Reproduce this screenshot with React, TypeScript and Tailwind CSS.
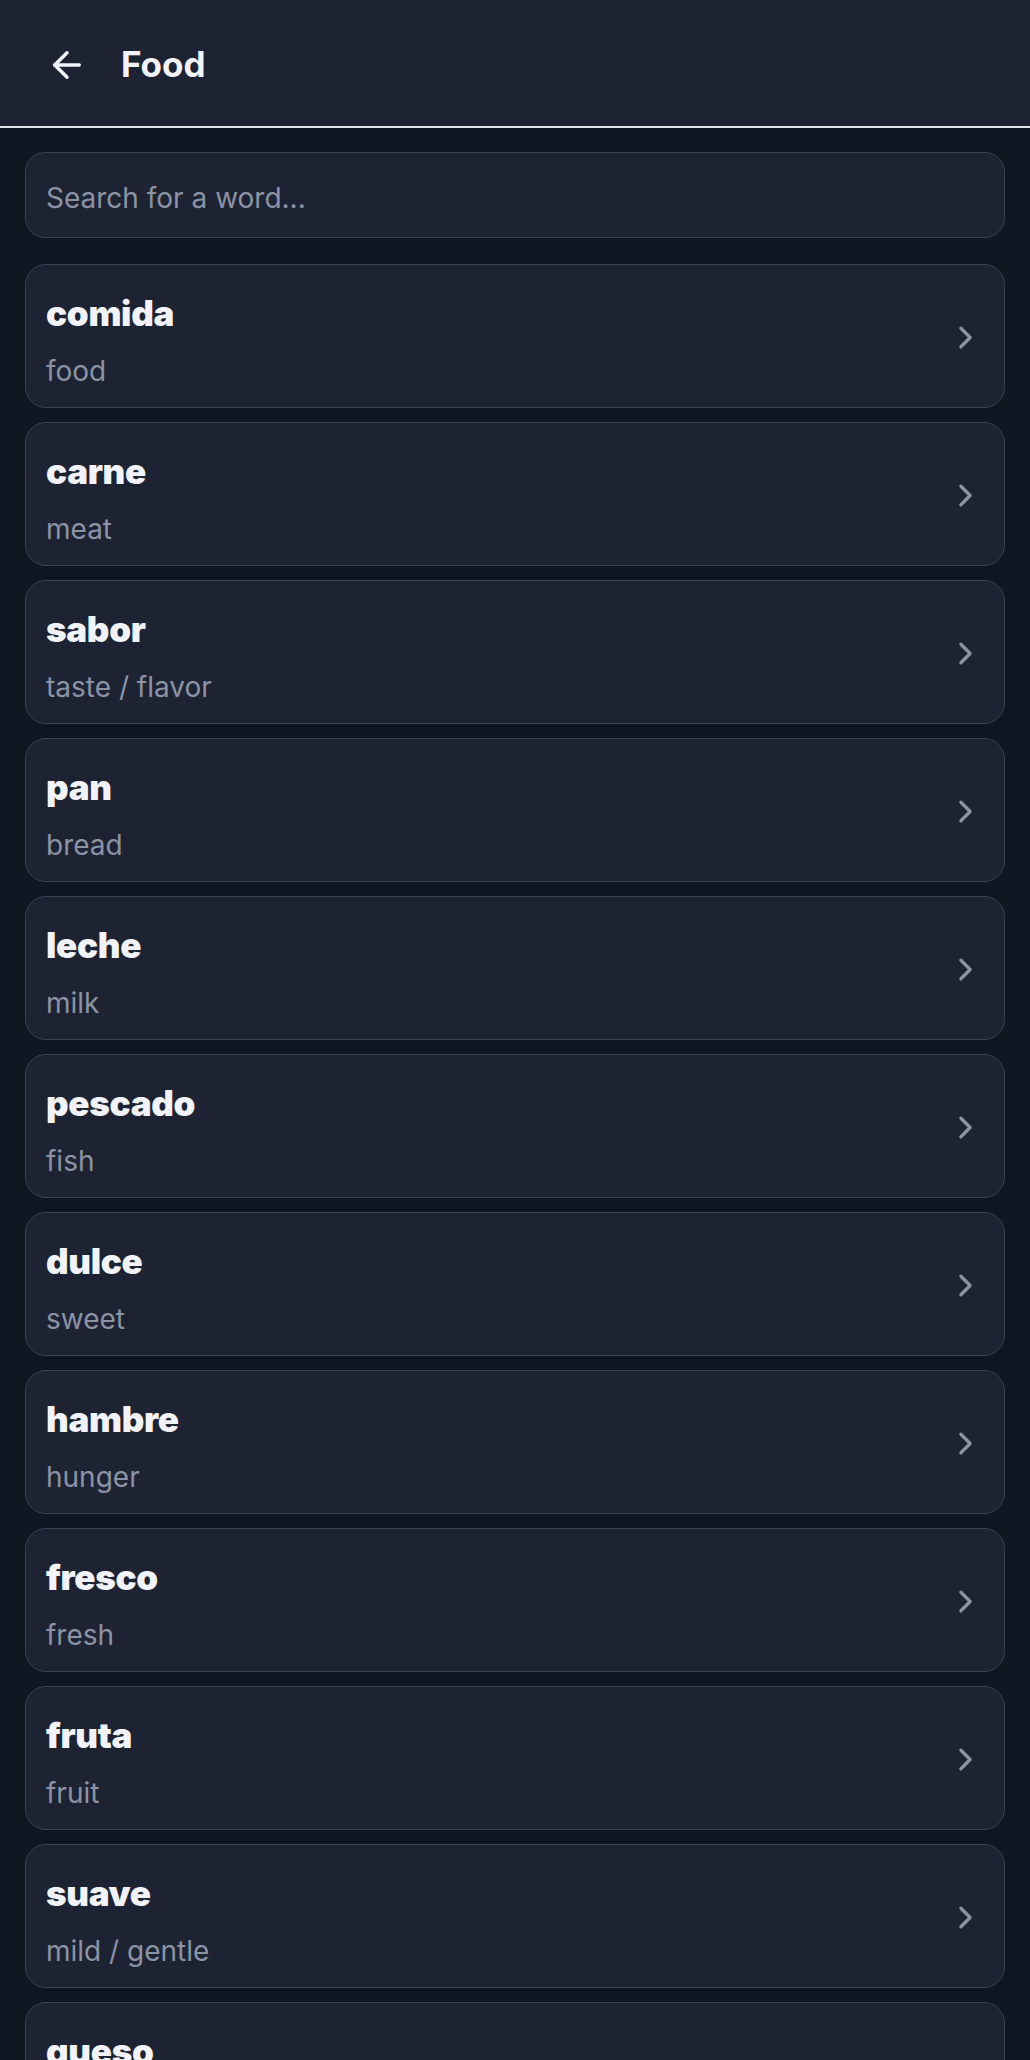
import React from "react";
import { ArrowLeft, ChevronRight } from "lucide-react";

const words: [string, string][] = [
  ["comida", "food"],
  ["carne", "meat"],
  ["sabor", "taste / flavor"],
  ["pan", "bread"],
  ["leche", "milk"],
  ["pescado", "fish"],
  ["dulce", "sweet"],
  ["hambre", "hunger"],
  ["fresco", "fresh"],
  ["fruta", "fruit"],
  ["suave", "mild / gentle"],
  ["queso", "cheese"],
  ["agua", "water"],
];

export default function App() {
  return (
    <div
      className="min-h-screen bg-[#111623] text-[#f1f3f8]"
      style={{ fontFamily: "Inter, 'Noto Sans', sans-serif" }}
    >
      <header className="flex h-[128px] items-center gap-[33px] border-b-2 border-[#e5e7eb] bg-[#1e2333] pl-[46px] pt-[3px]">
        <ArrowLeft size={42} strokeWidth={2} className="text-[#f1f3f8]" />
        <h1 className="text-[35px] font-bold leading-none">Food</h1>
      </header>
      <main className="flex flex-col px-[25px] pt-[24px]">
        <div className="flex h-[86px] items-center rounded-[20px] border-[1.5px] border-[#3a4152] bg-[#1e2333] px-[20px] pt-[6px]">
          <input
            className="w-full bg-transparent text-[28px] text-[#f1f3f8] outline-none placeholder:text-[#8b93a5]"
            placeholder="Search for a word..."
          />
        </div>
        <ul className="mt-[26px] flex flex-col gap-[14px]">
          {words.map(([es, en]) => (
            <li
              key={es}
              className="flex items-center justify-between rounded-[21px] border-[1.5px] border-[#3a4152] bg-[#1e2333] pl-[20px] pr-[20px] pt-[27px] pb-[15px]"
            >
              <div className="flex flex-col">
                <span className="text-[35px] font-black leading-[42px] tracking-[-0.3px] text-[#f1f3f8]">
                  {es}
                </span>
                <span className="mt-[16px] text-[28px] leading-[42px] text-[#8b93a5]">
                  {en}
                </span>
              </div>
              <ChevronRight size={37} strokeWidth={2.1} className="mb-[10px] text-[#8b93a5]" />
            </li>
          ))}
        </ul>
      </main>
    </div>
  );
}
